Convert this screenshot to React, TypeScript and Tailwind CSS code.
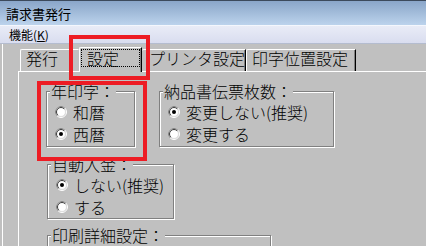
import React from 'react'

const FONT = "font-['Noto_Sans_CJK_JP','Noto_Sans_CJK_SC',sans-serif]"

function Radio({ checked }: { checked?: boolean }) {
  return (
    <svg width="12" height="12" viewBox="0 0 12 12" className="shrink-0">
      <circle cx="6" cy="6" r="5.5" fill="none" stroke="#ffffff" />
      <path d="M2.1 9.9 A5.5 5.5 0 0 1 9.9 2.1" fill="none" stroke="#808080" />
      <circle cx="6" cy="6" r="4.5" fill="#ffffff" stroke="#dfdfdf" />
      <path d="M2.8 9.2 A4.5 4.5 0 0 1 9.2 2.8" fill="none" stroke="#404040" />
      {checked && <circle cx="6" cy="6" r="2" fill="#000000" />}
    </svg>
  )
}

function Option({ label, checked }: { label: string; checked?: boolean }) {
  return (
    <div className="flex items-center gap-[6px] h-[22px] pl-[8px]">
      <Radio checked={checked} />
      <span className="text-[16px] leading-[16px]">{label}</span>
    </div>
  )
}

function Group({
  title,
  className,
  children,
}: {
  title: string
  className: string
  children?: React.ReactNode
}) {
  return (
    <fieldset
      className={
        'm-0 min-w-0 border border-[#808080] shadow-[inset_1px_1px_0_#ffffff,1px_1px_0_#ffffff] ' +
        className
      }
    >
      <legend className="ml-[3px] px-px h-[16px] bg-[#c0c0c0] text-[16px] leading-[16px]">{title}</legend>
      {children}
    </fieldset>
  )
}

export default function App() {
  return (
    <div className={'relative w-[426px] h-[246px] overflow-hidden bg-[#c0c0c0] text-black font-light ' + FONT}>
      {/* title bar */}
      <div className="h-[25px] border-t border-[#3c4a5c] bg-gradient-to-b from-[#8aa6c9] to-[#bcd3ec] flex items-center pl-[6px]">
        <span className="text-[13px] leading-none font-normal">請求書発行</span>
      </div>
      {/* menu bar */}
      <div className="h-[19px] border-t border-[#f4f7fd] border-b border-b-[#b4bccf] bg-gradient-to-b from-[#e9ecf7] to-[#d9ddef] flex items-center pl-[9px]">
        <span className="text-[12px] leading-none font-normal">
          機能(<span className="underline">K</span>)
        </span>
      </div>

      {/* body */}
      <div className="h-[202px] border-l border-white ml-[2px] pl-[15px] pt-[3px]">
        {/* tabs */}
        <div className="flex items-end h-[24px] text-[16px] leading-[17px]">
          <div className="ml-[2px] w-[59px] h-[22px] border-t border-l border-white border-r border-r-transparent rounded-tl-[2px] pl-[5px]">
            発行
          </div>
          <div className="relative z-10 -mb-px w-[63px] h-[25px] border-t border-l border-white border-r border-r-black rounded-tl-[2px] shadow-[inset_-1px_0_0_#808080] bg-[#c0c0c0] pt-px pl-px">
            <div className="w-[59px] h-[18px] border border-dotted border-black pl-[5px] leading-[16px]">
              設定
            </div>
          </div>
          <div className="w-[104px] h-[22px] border-t border-white border-r border-r-black shadow-[inset_-1px_0_0_#808080] rounded-tl-[2px] pl-[7px]">
            プリンタ設定
          </div>
          <div className="w-[110px] h-[22px] border-t border-l border-white border-r border-r-black shadow-[inset_-1px_0_0_#808080] rounded-tl-[2px] pl-[5px]">
            印字位置設定
          </div>
        </div>

        {/* panel */}
        <div className="border-t border-l border-white h-full pl-[27px] pt-[11px]">
          <div className="flex gap-[24px]">
            <Group title="年印字：" className="w-[89px] h-[64px] pt-[2px]">
              <Option label="和暦" />
              <Option label="西暦" checked />
            </Group>
            <Group title="納品書伝票枚数：" className="w-[175px] h-[64px] pt-[2px]">
              <Option label="変更しない(推奨)" checked />
              <Option label="変更する" />
            </Group>
          </div>
          <div className="mt-[9px] ml-px">
            <Group title="自動入金：" className="w-[127px] h-[63px] pt-[2px]">
              <Option label="しない(推奨)" checked />
              <Option label="する" />
            </Group>
          </div>
          <div className="mt-[8px] ml-px">
            <Group title="印刷詳細設定：" className="w-[224px] h-[60px]" />
          </div>
        </div>
      </div>

      {/* red highlight boxes */}
      <div className="absolute left-[69px] top-[35px] w-[81px] h-[45px] border-4 border-[#ed1c24] z-20" />
      <div className="absolute left-[37px] top-[81px] w-[110px] h-[80px] border-4 border-[#ed1c24] z-20" />
    </div>
  )
}
